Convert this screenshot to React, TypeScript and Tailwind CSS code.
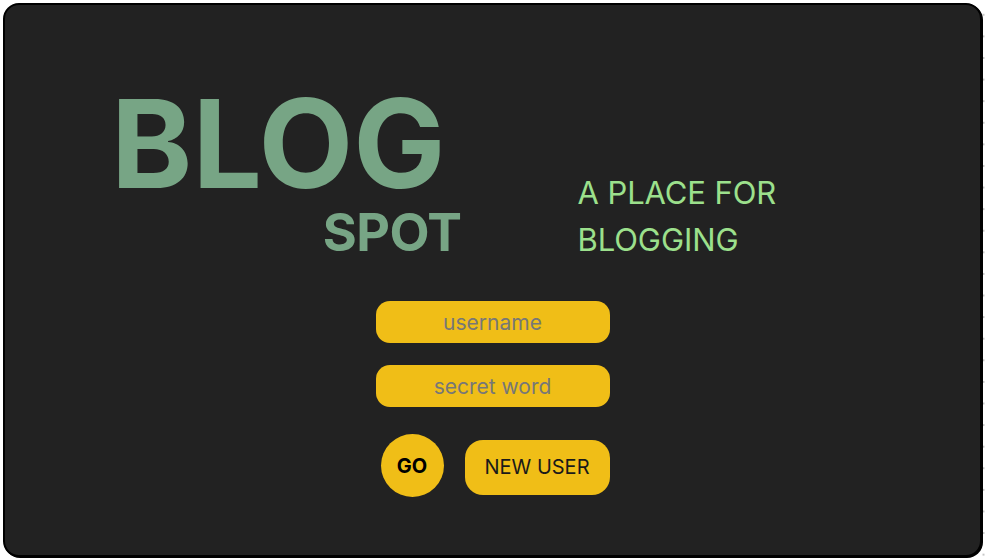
export default function App() {
  return (
    <div className="w-[988px] h-[559px] bg-white bg-[radial-gradient(#c8c8c8_1px,transparent_1px)] bg-[size:21.6px_21.6px] bg-[position:1px_4px] p-[3px] pr-[6px] pb-[2px] font-['Inter',sans-serif]">
      <div className="w-full h-full rounded-[16px] border-2 border-black bg-[#222222] shadow-[1px_1px_0_#000] flex flex-col">
        <div className="flex items-start pt-[77px]">
          <div className="ml-[106px] flex flex-col items-end">
            <div className="text-[123px] font-bold leading-none text-[#77a585]">
              BLOG
            </div>
            <div className="text-[52px] font-bold leading-none text-[#77a585] mt-[2px] mr-[-16px] tracking-[-0.5px]">
              SPOT
            </div>
          </div>
          <div className="ml-[132px] mt-[87px] text-[31px] leading-[47px] text-[#9ce08c] tracking-[-0.1px]">
            A PLACE FOR
            <br />
            BLOGGING
          </div>
        </div>
        <div className="flex flex-col items-center mt-[38px]">
          <input
            type="text"
            placeholder="username"
            className="w-[234px] h-[42px] rounded-[14px] bg-[#f0be17] text-center text-[21px] text-[#222] placeholder:text-[#777] outline-none"
          />
          <input
            type="password"
            placeholder="secret word"
            className="mt-[22px] w-[234px] h-[42px] rounded-[14px] bg-[#f0be17] text-center text-[21px] text-[#222] placeholder:text-[#777] outline-none"
          />
          <div className="mt-[27px] w-[234px] flex items-center">
            <button className="ml-[5px] w-[63px] h-[63px] rounded-full bg-[#f0be17] text-[20px] font-bold text-black">
              GO
            </button>
            <button className="ml-auto mt-[3px] w-[145px] h-[55px] rounded-[18px] bg-[#f0be17] text-[20px] text-[#1a1a1a]">
              NEW USER
            </button>
          </div>
        </div>
      </div>
    </div>
  );
}
